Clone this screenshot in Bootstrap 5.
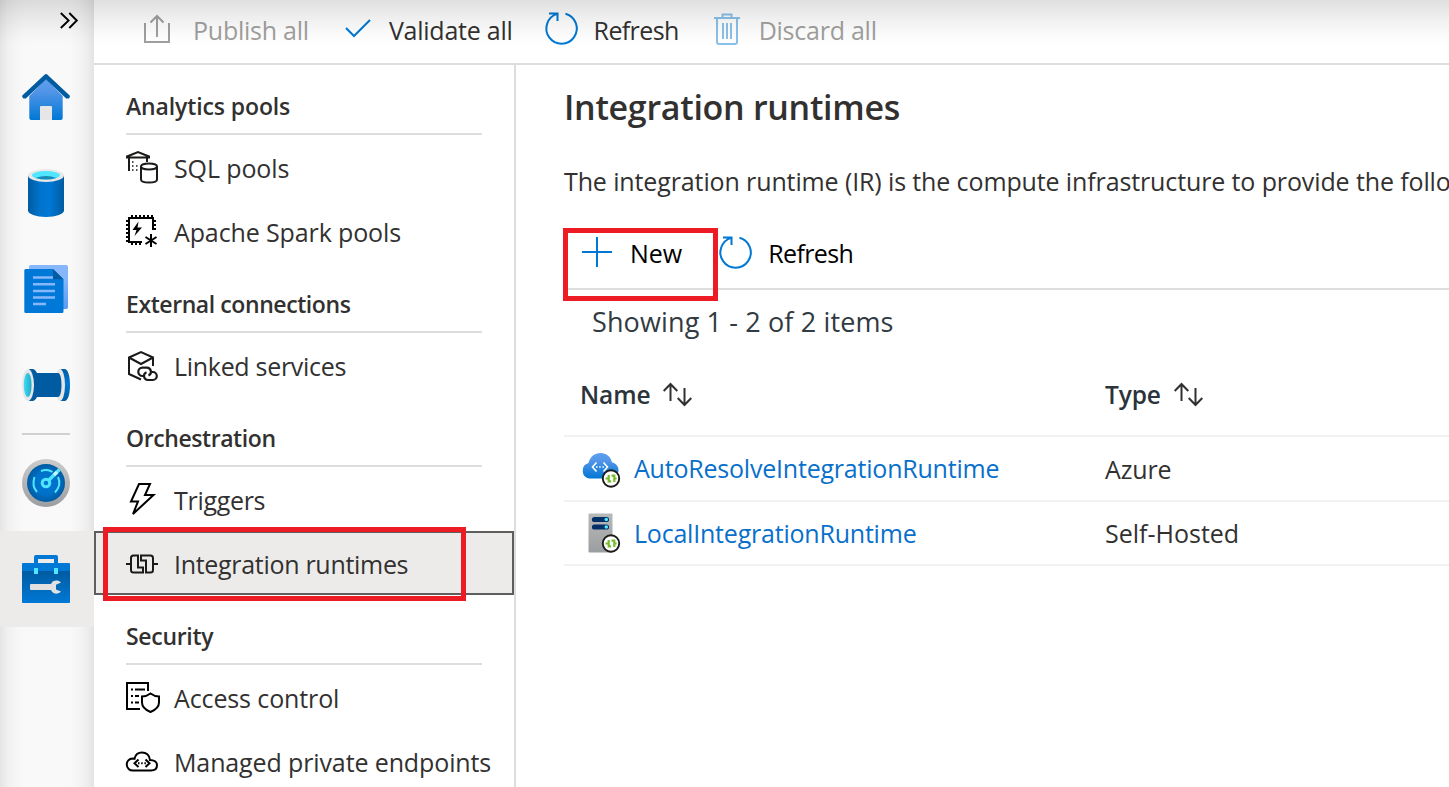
<!DOCTYPE html>
<html lang="en">
<head>
<meta charset="utf-8">
<title>Integration runtimes</title>
<link href="https://cdn.jsdelivr.net/npm/bootstrap@5.3.0/dist/css/bootstrap.min.css" rel="stylesheet">
<style>
body{font-family:"Open Sans","Noto Sans",sans-serif;font-size:25px;line-height:32px;color:#323130;background:#fff;width:1449px;height:787px;overflow:hidden}
svg{display:block;flex:none;overflow:visible}
.top-fade{height:45px;background:linear-gradient(rgba(0,0,0,.125),rgba(0,0,0,.07) 35%,rgba(0,0,0,.02) 75%,transparent);pointer-events:none;z-index:5}
.rail{width:94px;flex:none;background:linear-gradient(90deg,#e4e4e4,#f0f0f0 8%,#f6f6f6 18%,#f9f9f9 28%,#f9f9f9 74%,#f4f4f4 85%,#ececec 94%,#e3e3e3)}
.rail-top{height:49px;padding:12px 0 0 60px}
.rail-item{height:96px;padding-left:22px}
.rail-item.on{background:#edebe9}
.rail-sep{height:2px;margin:0 24px 0 22px;background:#d2d0ce}
.cmdbar{height:65px;border-bottom:2px solid #ddd;padding-bottom:2px;letter-spacing:-.24px}
.ic-publish{margin:-2px 23px 0 50px}
.ic-check{margin:-5px 18px 0 36px}
.ic-refresh{margin:-3px 16px 0 32px}
.ic-trash{margin:-3px 19px 0 35px}
.dim{color:#a19f9d}
.tight-1{letter-spacing:-.12px}
.tight-2{letter-spacing:-.21px}
.tight-3{letter-spacing:-.3px}
.tight-4{letter-spacing:-.42px}
.tight-6{letter-spacing:-.62px}
.side{width:422px;flex:none;border-right:2px solid #ddd}
.side h2{font-size:23px;line-height:32px;font-weight:600;height:70px;margin:0 32px;padding-top:25px;border-bottom:2px solid #ddd}
.side-item{height:64px;padding:2px 0 0 32px;color:#323130;text-decoration:none;gap:16px;white-space:nowrap}
.side-item svg{width:32px;height:32px;margin-top:-2px}
.side-item svg.low{margin-top:0}
.side-item.on{background:#edebe9;outline:2px solid #605e5c;outline-offset:-2px}
.callout-box{border:5px solid #ed1c24;pointer-events:none;z-index:3}
.box-nav{left:9px;top:-4px;width:363px;height:74px}
.box-new{left:-1px;top:10px;width:155px;height:73px}
.shell{min-width:0;min-height:0}
.content-pane{padding-left:48px;overflow:hidden}
h1{font-size:34px;line-height:44px;font-weight:600;margin:0;padding-top:20px;height:86px;letter-spacing:-.29px}
.intro{height:67px;padding-top:14px;letter-spacing:-.12px}
.tools{height:72px;border-bottom:2px solid #ddd;color:#000}
.ic-plus{margin:-2px 18px 0 18px}
.ic-reload{margin:-1px 16px 0 37px}
.showing{padding:16px 0 0 28px;height:73px;font-size:27px;letter-spacing:.13px;color:#323a42}
.grid-head{height:74px;font-weight:600;font-size:24.500px;color:#2b333b;border-bottom:2px solid #f1f1f1;padding:0 0 8px 16px}
.sort{margin-left:13px}
.grid-row{border-bottom:2px solid #f1f1f1;padding-left:16px;height:65px}
.grid-row + .grid-row{height:64px}
.ic-row{margin:0 13px 0 1px}
.ic-cloud{margin-top:2px}
.type-low{padding-top:2px}
.col-name{width:525px;flex:none}
.col-name a{color:#0870cb;text-decoration:none}
</style>
</head>
<body>
<div class="position-absolute top-0 start-0 w-100 top-fade"></div>
<div class="d-flex h-100">
  <nav class="rail d-flex flex-column">
    <div class="rail-top"><svg width="18" height="17" fill="none" stroke="#000" stroke-width="1.9"><path d="M.8 1l7.8 7.500L.8 16M9.300 1l7.500 7.500L9.300 16"/></svg></div>
    <div class="rail-item d-flex align-items-center"><svg width="48" height="46" viewBox="0 0 48 46"><defs><linearGradient id="blue" x2="0" y2="1"><stop stop-color="#5ea0ef"/><stop offset=".3" stop-color="#5395e8"/><stop offset="1" stop-color="#0078d4"/></linearGradient></defs><path d="M7.300 22L24 5l16.700 17v22a2 2 0 0 1-2 2H9.300a2 2 0 0 1-2-2z" fill="url(#blue)"/><path d="M18 33a1 1 0 0 1 1-1h10a1 1 0 0 1 1 1v13H18z" fill="#e6e6e6"/><path d="M.3 21.500L22.500.8q1.500-1.400 3 0L47.700 21.500q1 1.500-1 3h-2.500L24 5.500 3.800 24.500H1.500q-2-1.500-1.200-3z" fill="#005ba1"/></svg></div>
    <div class="rail-item d-flex align-items-center"><svg width="48" height="48" viewBox="0 0 48 48"><defs><linearGradient id="cyl"><stop stop-color="#005ba1"/><stop offset=".35" stop-color="#0074cd"/><stop offset=".6" stop-color="#0078d4"/><stop offset="1" stop-color="#005ba1"/></linearGradient></defs><path d="M6 6v35.500C6 45 14 48 24 48s18-3 18-6.500V6z" fill="url(#cyl)"/><ellipse cx="24" cy="6.500" rx="18" ry="6.500" fill="#e8e8e8"/><ellipse cx="24" cy="6.300" rx="14" ry="4.200" fill="#50e6ff"/><path d="M13.500 9q10.500-4 21 0-10.500 3-21 0z" fill="#198ab3"/></svg></div>
    <div class="rail-item d-flex align-items-center"><svg width="48" height="48" viewBox="0 0 48 48"><defs><linearGradient id="page" x2="0" y2="1"><stop offset=".3" stop-color="#86b7fb"/><stop offset="1" stop-color="#5a9bf3"/></linearGradient></defs><rect x="7" y="0" width="39" height="44" rx="1.800" fill="url(#page)"/><path d="M3.500 4H31l10.500 10.300V46.500a1.500 1.500 0 0 1-1.500 1.500H3.800A1.500 1.500 0 0 1 2.300 46.500V5.500A1.500 1.500 0 0 1 3.500 4z" fill="#0078d7"/><path d="M31 4l10.500 10.300H31z" fill="#005ba1"/><path d="M11 12.500h20M11 19.300h22M11 26h22M11 32.500h22M11 39h13" stroke="#86b7fb" stroke-width="2.400" fill="none"/></svg></div>
    <div class="rail-item d-flex align-items-center"><svg width="48" height="48" viewBox="0 0 48 48"><defs><linearGradient id="teal"><stop stop-color="#40dcf5"/><stop offset="1" stop-color="#20a9c8"/></linearGradient><linearGradient id="rim" x2="0" y2="1"><stop stop-color="#005ba1"/><stop offset=".45" stop-color="#0078d4"/><stop offset="1" stop-color="#005ba1"/></linearGradient></defs><path d="M38 8h4.500C46 8 48 15 48 24s-2 16-5.500 16H38z" fill="url(#rim)"/><ellipse cx="38" cy="24" rx="5" ry="16" fill="#e6e6e6"/><path d="M7 8h3.500q2.500 0 4.500 4h21c2 0 3.500 4 3.500 12s-1.500 12-3.500 12H15q-2 4-4.500 4H7z" fill="#005ba1"/><ellipse cx="6" cy="24" rx="6" ry="16" fill="#e6e6e6"/><ellipse cx="5.700" cy="24" rx="3.900" ry="12" fill="url(#teal)"/></svg></div>
    <div class="rail-sep"></div>
    <div class="rail-item d-flex align-items-center"><svg width="48" height="48" viewBox="0 0 48 48"><defs><radialGradient id="dial"><stop stop-color="#0078d4"/><stop offset=".6" stop-color="#0070c8"/><stop offset="1" stop-color="#005ba1"/></radialGradient><linearGradient id="steel" x2="0" y2="1"><stop stop-color="#b8b8b8"/><stop offset="1" stop-color="#9b9ea1"/></linearGradient><linearGradient id="ring" x2="0" y2="1"><stop stop-color="#ccc"/><stop offset="1" stop-color="#9b9ea1"/></linearGradient></defs><circle cx="24" cy="24" r="24" fill="url(#ring)"/><circle cx="24" cy="24" r="19" fill="url(#dial)"/><g fill="none" stroke="#50e6ff"><path d="M12.500 18q-3 9 2.500 15M19 12q6-2.300 11.500.8M36 18q3.800 8-3 15.500" stroke-width="2"/><circle cx="24" cy="24" r="3.800" stroke-width="3"/><path d="M26.500 21.500L37.500 10.500" stroke-width="3.400"/></g><path d="M32 16l3-3" stroke="#c8f7ff" stroke-width="3.400"/></svg></div>
    <div class="rail-item on d-flex align-items-center"><svg width="48" height="48" viewBox="0 0 48 48"><defs><linearGradient id="kit" x2="0" y2="1"><stop stop-color="#005ba1"/><stop offset="1" stop-color="#0078d4"/></linearGradient></defs><path d="M14 8V2h20v6" fill="none" stroke="#0078d4" stroke-width="4" stroke-linejoin="round"/><rect y="8" width="48" height="40" rx="1" fill="#0078d4"/><path d="M0 16h48v30.500a1 1 0 0 1-1 1H1a1 1 0 0 1-1-1z" fill="url(#kit)"/><path d="M12 13h4v6h-4zM32 13h4v6h-4z" fill="#50e6ff"/><path d="M9 29h20c1.500-4 7-4.500 10-1.500l-5 2.200v4.800l5 2C36 40 30.500 39 29 35H9q-1 0-1-1v-4q0-1 1-1z" fill="#e1e1e1"/></svg></div>
  </nav>

  <div class="shell flex-grow-1 d-flex flex-column">
    <header class="cmdbar d-flex align-items-center">
      <svg class="ic-publish" width="26" height="29" fill="none" stroke="#a19f9d" stroke-width="2"><path d="M1 8v19h24V8M13 22V1.500M6.500 7.500L13 1l6.500 6.500"/></svg><span class="dim">Publish all</span>
      <svg class="ic-check" width="26" height="18" fill="none" stroke="#0078d4" stroke-width="2"><path d="M1 9l8 8L25 1"/></svg><span>Validate all</span>
      <svg class="ic-refresh" width="33" height="33" fill="none" stroke="#0078d4" stroke-width="2"><path d="M12.300 1.900A15.200 15.200 0 1 0 20.500 1.800M4 1.500h8.500v7.500"/></svg><span class="tight-6">Refresh</span>
      <svg class="ic-trash" width="26" height="32" fill="none" stroke="#8ac1ea" stroke-width="2"><path d="M0 5h26M8.500 5V1.500h9V5M3 5v24q0 2 2 2h16q2 0 2-2V5M9 10v16M13 10v16M17 10v16"/></svg><span class="dim">Discard all</span>
    </header>
    <div class="shell d-flex flex-grow-1">
      <aside class="side">
        <h2 class="tight-1">Analytics pools</h2>
        <a class="side-item d-flex align-items-center"><svg viewBox="0 0 32 32" fill="none" stroke="#1b1a19" stroke-width="2"><path d="M1 5.500L12 1l11 4.500v1H1zM3 7v13M21 7v4"/><path d="M6 11h1.500M6 15h1.500M6 19h1.500M10 15h1.500M10 19h1.500" stroke-width="1.600"/><ellipse cx="23" cy="15.500" rx="8" ry="3"/><path d="M15 15.500v13c0 4 16 4 16 0v-13"/></svg><span class="tight-1">SQL pools</span></a>
        <a class="side-item d-flex align-items-center"><svg viewBox="0 0 32 32" fill="none" stroke="#000" stroke-width="2"><path d="M16 27H3V3h24v12"/><path d="M5 1h23" stroke-dasharray="2 2"/><path d="M1 5v23M29 5v11" stroke-dasharray="2 2"/><path d="M5 29h12" stroke-dasharray="2 2"/><path d="M12.500 6.500L6.500 15h4l-2 6 7.500-8.500h-4.500z" fill="#000" stroke="none"/><path d="M25 19v13M19.500 22l11 7M30.500 22l-11 7"/></svg><span class="tight-1">Apache Spark pools</span></a>
        <h2 class="tight-4">External connections</h2>
        <a class="side-item d-flex align-items-center"><svg class="low" viewBox="0 0 32 32" fill="none" stroke="#1b1a19" stroke-width="2"><path d="M15 29.500L3 24V7.500L15 2l12 5.500V16M3 7.500L15 14l12-6.500"/><path d="M19 26h-2.500a4.200 4.200 0 0 1 0-8.400h4.500a4.200 4.200 0 0 1 1.500 8M24.500 22h2.300a4 4 0 0 1 0 8h-5a4 4 0 0 1-1.300-7.700" stroke-width="2.200"/></svg><span class="tight-3">Linked services</span></a>
        <h2 class="tight-4">Orchestration</h2>
        <a class="side-item d-flex align-items-center"><svg viewBox="0 0 32 32" fill="none" stroke="#000" stroke-width="2"><path d="M13 1h11l-5 11h8.500L7 31l5-12.500H5z"/></svg><span class="tight-3">Triggers</span></a>
        <a class="side-item on position-relative d-flex align-items-center"><svg class="low" viewBox="0 0 32 32" fill="none" stroke="#1b1a19" stroke-width="2"><path d="M0 16h5M27 16h5M12 7.500H7.500Q5 7.500 5 10v12q0 2.500 2.500 2.500H17v-5h-5zM20 24.500h4.500q2.500 0 2.500-2.500V10q0-2.500-2.500-2.500H15v5h5z"/></svg><span class="tight-3">Integration runtimes</span><div class="callout-box box-nav position-absolute"></div></a>
        <h2 class="tight-3">Security</h2>
        <a class="side-item d-flex align-items-center"><svg viewBox="0 0 32 32" fill="none" stroke="#000" stroke-width="2"><path d="M14 28H1V2h21v8M5 8.500h2M9 8.500h10M5 15h2M9 15h4M5 21.500h2M9 21.500h4"/><path d="M24.500 12.500q4 3 8.500 3v6q0 6-8.500 9.500-8.500-3.500-8.500-9.500v-6q4.500 0 8.500-3z"/></svg><span class="tight-1">Access control</span></a>
        <a class="side-item d-flex align-items-center"><svg viewBox="0 0 32 32" fill="none" stroke="#000" stroke-width="2"><path d="M7 25.500a6 6 0 0 1-.5-12q1.500 0 2 .2C9.500 9 12.500 7.500 16 7.500c4 0 7.500 2.500 8 7.500 4 0 7 2 7 5.300s-2.500 5.200-6 5.200z"/><path d="M12.500 14.500l-4 3.800 4 3.700M19.500 14.500l4 3.800-4 3.700"/><path d="M12 18.200h1.500M15.200 18.200h1.500M18.400 18.200h1.500"/></svg><span class="tight-1">Managed private endpoints</span></a>
      </aside>
      <main class="content-pane flex-grow-1 text-nowrap">
        <h1>Integration runtimes</h1>
        <div class="intro">The integration runtime (IR) is the compute infrastructure to provide the following</div>
        <div class="tools d-flex align-items-center position-relative">
          <svg class="ic-plus" width="30" height="30" fill="none" stroke="#0078d4" stroke-width="2"><path d="M0 15h30M15 0v30"/></svg><span>New</span>
          <svg class="ic-reload" width="33" height="33" fill="none" stroke="#0078d4" stroke-width="2"><path d="M12.300 1.900A15.200 15.200 0 1 0 20.500 1.800M4 1.500h8.500v7.500"/></svg><span class="tight-6">Refresh</span>
          <div class="callout-box box-new position-absolute"></div>
        </div>
        <div class="showing">Showing 1 - 2 of 2 items</div>
        <div class="grid-head d-flex align-items-center">
          <div class="col-name d-flex align-items-center"><span class="tight-1">Name</span><svg class="sort" width="29" height="23" fill="none" stroke="#323130" stroke-width="2"><path d="M7.500 18V1M.7 8l6.800-7 6.800 7M21.500 5v17M14.700 15l6.800 7 6.800-7"/></svg></div>
          <span class="tight-1">Type</span><svg class="sort" width="29" height="23" fill="none" stroke="#323130" stroke-width="2"><path d="M7.500 18V1M.7 8l6.800-7 6.800 7M21.500 5v17M14.700 15l6.800 7 6.800-7"/></svg>
        </div>
        <div class="grid-row d-flex align-items-center">
          <div class="col-name d-flex align-items-center"><svg class="ic-row ic-cloud" width="40" height="38" viewBox="0 1 40 38"><path d="M8 29.500a8 8 0 0 1-.5-15.500C9 7.500 14 4 19.500 4c6 0 10.500 4 11.500 9.500 4 .5 6.500 4 6.500 7.500 0 5-3.500 8.500-8 8.500z" fill="url(#blue)"/><path d="M15.500 13.500l-4 4.500 4 4.500M22.500 13.500l4 4.500-4 4.500" fill="none" stroke="#fff" stroke-width="1.600"/><path d="M15 18h1.500M18.200 18h1.500M21.400 18h1.500" stroke="#fff" stroke-width="1.600"/><g id="badge"><circle cx="30" cy="29.500" r="8.200" fill="#fff" stroke="#1b1a19" stroke-width="1.900"/><path d="M27.700 26v6.300h2.400M30.500 26.700h2.800V33M24.600 29.500h3M33.300 29.500h2.300" fill="none" stroke="#76bc2d" stroke-width="2.200"/></g></svg><a class="tight-2">AutoResolveIntegrationRuntime</a></div><span class="tight-1 type-low">Azure</span>
        </div>
        <div class="grid-row d-flex align-items-center">
          <div class="col-name d-flex align-items-center"><svg class="ic-row" width="40" height="40" viewBox="0 0 40 40"><rect x="7.500" y=".5" width="24" height="39" rx="1" fill="url(#steel)"/><path d="M13.500 6.500h12M13.500 14h12" stroke="#003067" stroke-width="5.200" stroke-linecap="round"/><circle cx="25.300" cy="6.500" r="1.800" fill="#50e6ff"/><circle cx="25.300" cy="14" r="1.800" fill="#50e6ff"/><use href="#badge" y="1"/></svg><a class="tight-2">LocalIntegrationRuntime</a></div><span>Self-Hosted</span>
        </div>
      </main>
    </div>
  </div>
</div>
<script src="https://cdn.jsdelivr.net/npm/bootstrap@5.3.0/dist/js/bootstrap.bundle.min.js"></script>
</body>
</html>
